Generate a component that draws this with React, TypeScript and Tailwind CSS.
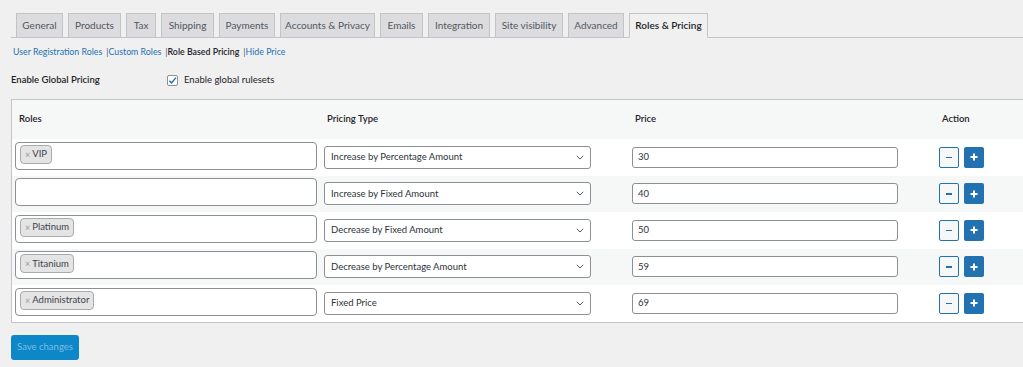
import React from "react";

const TABS = [
  { label: "General", w: "w-[47px]" },
  { label: "Products", w: "w-[53px]" },
  { label: "Tax", w: "w-[30px]" },
  { label: "Shipping", w: "w-[53px]" },
  { label: "Payments", w: "w-[56px]" },
  { label: "Accounts & Privacy", w: "w-[95px]" },
  { label: "Emails", w: "w-[43px]" },
  { label: "Integration", w: "w-[62px]" },
  { label: "Site visibility", w: "w-[68px]" },
  { label: "Advanced", w: "w-[56px]" },
  { label: "Roles & Pricing", w: "w-[79px]", active: true },
];

const ROWS = [
  { role: "VIP", type: "Increase by Percentage Amount", price: "30" },
  { role: "", type: "Increase by Fixed Amount", price: "40" },
  { role: "Platinum", type: "Decrease by Fixed Amount", price: "50" },
  { role: "Titanium", type: "Decrease by Percentage Amount", price: "59" },
  { role: "Administrator", type: "Fixed Price", price: "69" },
];

export default function App() {
  return (
    <div
      className="h-[367px] w-full overflow-hidden bg-[#f0f0f1] text-[9.5px] text-[#1d2327]"
      style={{ fontFamily: 'Lato, "Noto Sans", Arial, sans-serif' }}
    >
      <div className="pl-[11px] pt-[13px]">
        <nav className="flex h-[25px] items-end gap-[5px] border-b border-[#c3c4c7] pl-[5px]">
          {TABS.map((t) => (
            <div
              key={t.label}
              className={`-mb-px flex h-[25px] shrink-0 items-center justify-center border border-[#c3c4c7] text-[10px] ${t.w} ${
                t.active
                  ? "border-b-[#f0f0f1] bg-[#f0f0f1] font-semibold text-[#1d2327]"
                  : "bg-[#dcdcde] text-[#50575e]"
              }`}
            >
              {t.label}
            </div>
          ))}
        </nav>

        <div className="mt-[8px] flex h-[12px] items-center pl-[2px] text-[8.8px] text-[#2271b1]">
          <a>User Registration Roles</a>
          <span className="ml-[4px] text-[#50575e]">|</span>
          <a>Custom Roles</a>
          <span className="ml-[4px] text-[#50575e]">|</span>
          <span className="font-semibold text-[#1d2327]">Role Based Pricing</span>
          <span className="ml-[4px] text-[#50575e]">|</span>
          <a>Hide Price</a>
        </div>

        <div className="mt-[15px] flex h-[14px] items-center">
          <span className="w-[156px] font-semibold">Enable Global Pricing</span>
          <span className="flex h-[11px] w-[11px] items-center justify-center rounded-[2px] border border-[#8c8f94] bg-white">
            <svg viewBox="0 0 10 10" className="h-[9px] w-[9px]">
              <path d="M1.5 5.2 L4 7.6 L8.8 1.8" fill="none" stroke="#2271b1" strokeWidth="1.6" />
            </svg>
          </span>
          <span className="ml-[6px]">Enable global rulesets</span>
        </div>

        <div className="mt-[12px] w-[1040px] border border-[#c3c4c7] bg-white">
          <div className="grid h-[39px] grid-cols-[308px_308px_307px_1fr] items-center bg-[#f6f7f7] font-semibold">
            <div className="pl-[7px]">Roles</div>
            <div className="pl-[7px]">Pricing Type</div>
            <div className="pl-[7px]">Price</div>
            <div className="pl-[7px]">Action</div>
          </div>
          {ROWS.map((r, i) => (
            <div
              key={i}
              className={`grid h-[36.5px] grid-cols-[308px_308px_307px_1fr] items-center ${
                i % 2 === 1 ? "bg-[#f6f7f7]" : "bg-white"
              }`}
            >
              <div className="pl-[3px]">
                <div className="mb-[3px] flex h-[28px] w-[302px] items-start rounded-[4px] border border-[#8c8f94] bg-white pl-[4px] pt-[2px]">
                  {r.role && (
                    <span className="flex h-[19px] items-center rounded-[4px] border border-[#aaaaaa] bg-[#e4e4e4] pl-[4px] pr-[4px] text-[#3c434a]">
                      <span className="mr-[2px] text-[9px] text-[#999999]">×</span>
                      {r.role}
                    </span>
                  )}
                </div>
              </div>
              <div className="pl-[4px]">
                <div className="flex h-[23px] w-[267px] items-center justify-between rounded-[3px] border border-[#8c8f94] bg-white pl-[6px] pr-[6px] text-[#2c3338]">
                  <span>{r.type}</span>
                  <svg viewBox="0 0 8 5" className="h-[5px] w-[8px]">
                    <path d="M0.8 0.8 L4 4 L7.2 0.8" fill="none" stroke="#50575e" strokeWidth="1" />
                  </svg>
                </div>
              </div>
              <div className="pl-[4px]">
                <div className="flex h-[21px] w-[266px] items-center rounded-[3px] border border-[#8c8f94] bg-white pl-[5px] text-[#2c3338]">
                  {r.price}
                </div>
              </div>
              <div className="flex items-center gap-[5px] pl-[4px]">
                <button className="flex h-[21px] w-[20px] items-center justify-center rounded-[2px] border border-[#2271b1] bg-[#f6f7f7]">
                  <span className="h-[1.5px] w-[6px] bg-[#2271b1]" />
                </button>
                <button className="flex h-[21px] w-[20px] items-center justify-center rounded-[2px] bg-[#2271b1]">
                  <svg viewBox="0 0 8 8" className="h-[8px] w-[8px]">
                    <path d="M4 0.5 V7.5 M0.5 4 H7.5" stroke="white" strokeWidth="2" />
                  </svg>
                </button>
              </div>
            </div>
          ))}
        </div>

        <button className="mt-[12px] flex h-[25px] w-[68px] items-center justify-center rounded-[3px] bg-[#0c87c8] text-[#7fbce4]">
          Save changes
        </button>
      </div>
    </div>
  );
}
